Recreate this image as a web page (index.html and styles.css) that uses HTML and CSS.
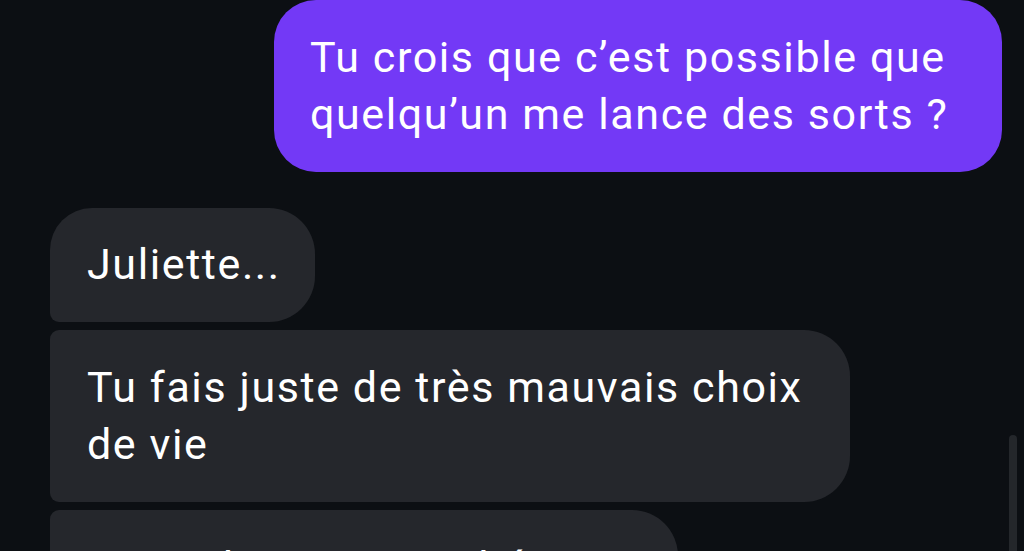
FILE: index.html
```html
<!DOCTYPE html>
<html lang="fr">
  <head>
    <meta charset="UTF-8" />
    <meta name="viewport" content="width=device-width, initial-scale=1.0" />
    <title>Messages</title>
    <link rel="stylesheet" href="styles.css">
  </head>
  <body>
    <div class="chat">
      <div class="msg sent">Tu crois que c’est possible que quelqu’un me lance des sorts ?</div>

      <div class="group">
        <div class="msg recv first">Juliette...</div>
        <div class="msg recv">Tu fais juste de très mauvais choix de vie</div>
        <div class="msg recv">Mais c’est quoi ta théorie ?</div>
      </div>
    </div>
    <div class="scroll-thumb"></div>
  </body>
</html>
```

FILE: styles.css
```css
* {
  margin: 0;
  padding: 0;
  box-sizing: border-box;
}
html, body {
  height: 100%;
}
body {
  background: #0c0f13;
  font-family: Roboto, 'Noto Sans', sans-serif;
  color: #fff;
  overflow: hidden;
  position: relative;
}

.chat {
  display: flex;
  flex-direction: column;
  gap: 36px;
  padding: 0 22px 0 50px;
}

.msg {
  font-size: 43px;
  line-height: 57px;
  letter-spacing: 1.6px;
  padding: 29px 37px;
  width: fit-content;
  max-width: 800px;
}

.sent {
  align-self: flex-end;
  max-width: 728px;
  padding: 29px 36px;
  background: #7339f6;
  border-radius: 42px;
}

.group {
  display: flex;
  flex-direction: column;
  gap: 8px;
}

.recv {
  background: #25272c;
  border-radius: 9px 46px 46px 9px;
}
.recv.first {
  padding: 28px 34px 29px 37px;
  border-top-left-radius: 42px;
}

.scroll-thumb {
  position: absolute;
  right: 7px;
  top: 435px;
  width: 8px;
  height: 140px;
  background: #24272b;
  border-radius: 4px;
}
```
